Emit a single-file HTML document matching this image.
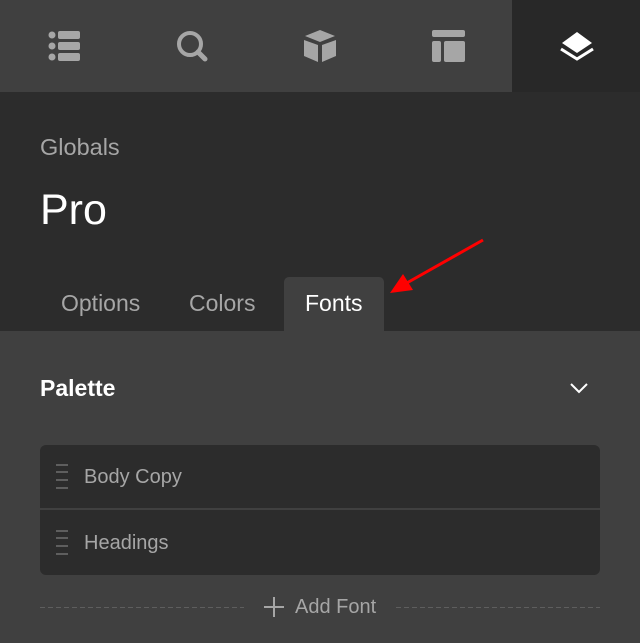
<!DOCTYPE html>
<html><head><style>
body{margin:0;width:640px;height:643px;background:#404040;font-family:"Liberation Sans",sans-serif;position:relative;overflow:hidden}
.a{position:absolute}
</style></head><body>
<div class="a" style="left:0;top:0;width:640px;height:92px;background:#404040"></div>
<div class="a" style="left:512px;top:0;width:128px;height:92px;background:#282828"></div>
<div class="a" style="left:0;top:92px;width:640px;height:239px;background:#2c2c2c"></div>
<svg class="a" style="left:0;top:0" width="640" height="92">
<g fill="#a6a6a6">
<circle cx="52" cy="35" r="3.5"/><circle cx="52" cy="46" r="3.5"/><circle cx="52" cy="57" r="3.5"/>
<rect x="58" y="31" width="22" height="8" rx="2"/><rect x="58" y="42" width="22" height="8" rx="2"/><rect x="58" y="53" width="22" height="8" rx="2"/>
<polygon points="320,30 335,36 320,42 305,36"/><polygon points="304,40 318,45 318,62 304,56"/><polygon points="336,40 322,45 322,62 336,56"/>
<rect x="432" y="30" width="33" height="7" rx="2"/><rect x="432" y="41" width="9" height="21" rx="2"/><rect x="444" y="41" width="21" height="21" rx="2"/>
</g>
<circle cx="190" cy="44" r="11" fill="none" stroke="#a6a6a6" stroke-width="4"/>
<line x1="198" y1="52" x2="205" y2="59" stroke="#a6a6a6" stroke-width="5" stroke-linecap="round"/>
<polygon points="577,32 592,43 577,53 562,43" fill="#fff"/>
<polyline points="561,49 577,59 593,49" fill="none" stroke="#fff" stroke-width="3"/>
</svg>
<div class="a" style="left:40px;top:134px;font-size:23.5px;color:#a6a6a6">Globals</div>
<div class="a" style="left:40px;top:186px;font-size:43px;color:#fff">Pro</div>
<div class="a" style="left:284px;top:277px;width:100px;height:54px;background:#404040;border-radius:5px 5px 0 0"></div>
<div class="a" style="left:61px;top:290px;font-size:23px;color:#a6a6a6">Options</div>
<div class="a" style="left:189px;top:290px;font-size:23px;color:#a6a6a6">Colors</div>
<div class="a" style="left:305px;top:290px;font-size:23px;color:#fff">Fonts</div>
<svg class="a" style="left:0;top:0" width="640" height="643">
<line x1="483" y1="240" x2="405" y2="284" stroke="#f00" stroke-width="3"/>
<polygon points="390,293 403,274 413,290" fill="#f00"/>
<polyline points="571,384 579,392 587,384" fill="none" stroke="#fff" stroke-width="2"/>
</svg>
<div class="a" style="left:40px;top:375px;font-size:23px;font-weight:bold;color:#fff">Palette</div>
<div class="a" style="left:40px;top:445px;width:560px;height:130px;background:#2c2c2c;border-radius:6px"></div>
<div class="a" style="left:40px;top:508px;width:560px;height:2px;background:#404040"></div>
<svg class="a" style="left:0;top:0" width="640" height="643" >
<g stroke="#5e5e5e" stroke-width="2">
<line x1="56" y1="465" x2="68" y2="465"/><line x1="56" y1="472" x2="68" y2="472"/><line x1="56" y1="480" x2="68" y2="480"/><line x1="56" y1="488" x2="68" y2="488"/>
<line x1="56" y1="531" x2="68" y2="531"/><line x1="56" y1="538" x2="68" y2="538"/><line x1="56" y1="546" x2="68" y2="546"/><line x1="56" y1="554" x2="68" y2="554"/>
</g>
<g stroke="#5e5e5e" stroke-width="1" stroke-dasharray="5,3">
<line x1="40" y1="607.5" x2="244" y2="607.5"/><line x1="396" y1="607.5" x2="600" y2="607.5"/>
</g>
<g stroke="#a6a6a6" stroke-width="2"><line x1="264" y1="607" x2="284" y2="607"/><line x1="274" y1="597" x2="274" y2="617"/></g>
</svg>
<div class="a" style="left:84px;top:466px;font-size:20px;color:#a6a6a6">Body Copy</div>
<div class="a" style="left:84px;top:532px;font-size:20px;color:#a6a6a6">Headings</div>
<div class="a" style="left:295px;top:596px;font-size:20px;color:#a6a6a6">Add Font</div>
</body></html>
